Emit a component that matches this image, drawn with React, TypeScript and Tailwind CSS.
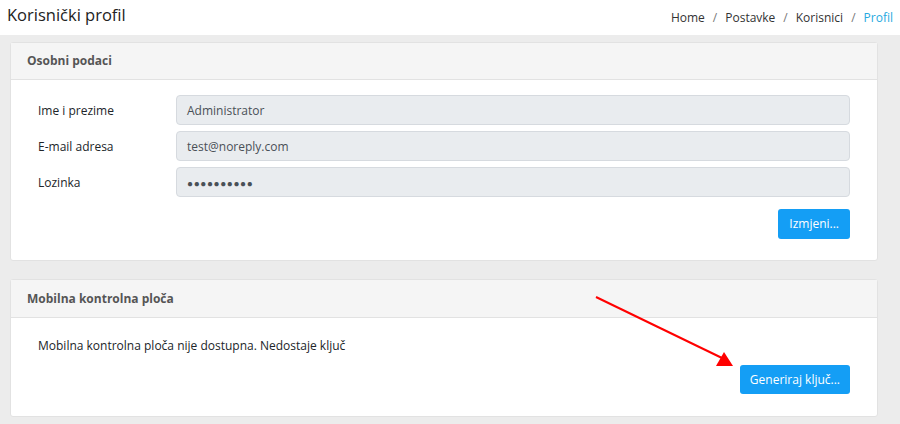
export default function App() {
  const fields = [
    { label: "Ime i prezime", value: "Administrator" },
    { label: "E-mail adresa", value: "test@noreply.com" },
    { label: "Lozinka", value: "●●●●●●●●●●", dots: true },
  ];

  return (
    <div className="relative h-[424px] w-[900px] overflow-hidden bg-[#ececec] font-['Open_Sans',sans-serif] text-[#212529]">
      {/* Page header */}
      <div className="flex h-[35px] items-center justify-between bg-white pl-[7px] pr-[7px]">
        <h1 className="mb-[4px] text-[16.5px] leading-none text-[#222]">Korisnički profil</h1>
        <nav className="flex items-center text-[12px] text-[#333]">
          <span>Home</span>
          <span className="px-[8px] text-[#777]">/</span>
          <span>Postavke</span>
          <span className="px-[8px] text-[#777]">/</span>
          <span>Korisnici</span>
          <span className="px-[8px] text-[#777]">/</span>
          <span className="text-[#26a9e0]">Profil</span>
        </nav>
      </div>

      <div className="flex w-[878px] flex-col gap-[18px] pl-[10px] pt-[7px]">
        {/* Osobni podaci */}
        <section className="rounded-[3px] border border-[#e2e2e2] bg-white">
          <div className="flex h-[37px] items-center border-b border-[#e2e2e2] bg-[#f5f5f5] px-[16px] text-[12px] font-bold text-[#555]">
            Osobni podaci
          </div>
          <div className="flex flex-col gap-[6px] pl-[27px] pr-[27px] pt-[15px]">
            {fields.map((f) => (
              <div key={f.label} className="flex items-center">
                <label className="w-[138px] pt-[2px] text-[12px]">{f.label}</label>
                <div
                  className={
                    "flex h-[30px] flex-1 items-center rounded-[4px] border border-[#d6dadf] bg-[#e9ecef] px-[10px] pt-[2px] text-[#495057] " +
                    (f.dots ? "text-[10px] tracking-[0.6px]" : "text-[12px]")
                  }
                >
                  {f.value}
                </div>
              </div>
            ))}
          </div>
          <div className="flex justify-end pb-[21px] pr-[27px] pt-[12px]">
            <button className="h-[30px] rounded-[3px] bg-[#149ef5] px-[11px] text-[12px] text-white">
              Izmjeni...
            </button>
          </div>
        </section>

        {/* Mobilna kontrolna ploča */}
        <section className="rounded-[3px] border border-[#e2e2e2] bg-white">
          <div className="flex h-[38px] items-center border-b border-[#e2e2e2] bg-[#f5f5f5] px-[16px] text-[12px] font-bold text-[#555]">
            Mobilna kontrolna ploča
          </div>
          <div className="pl-[27px] pr-[27px] pt-[19px] text-[12px] leading-[18px]">
            Mobilna kontrolna ploča nije dostupna. Nedostaje ključ
          </div>
          <div className="flex justify-end pb-[22px] pr-[27px] pt-[10px]">
            <button className="h-[29px] rounded-[3px] bg-[#149ef5] px-[10px] text-[12px] text-white">
              Generiraj ključ...
            </button>
          </div>
        </section>
      </div>

      {/* Annotation arrow */}
      <svg className="pointer-events-none absolute left-0 top-0" width="900" height="424">
        <line x1="596" y1="297" x2="722" y2="358" stroke="#ff0000" strokeWidth="2" />
        <polygon points="733,366 716,366 724,352" fill="#ff0000" />
      </svg>
    </div>
  );
}
